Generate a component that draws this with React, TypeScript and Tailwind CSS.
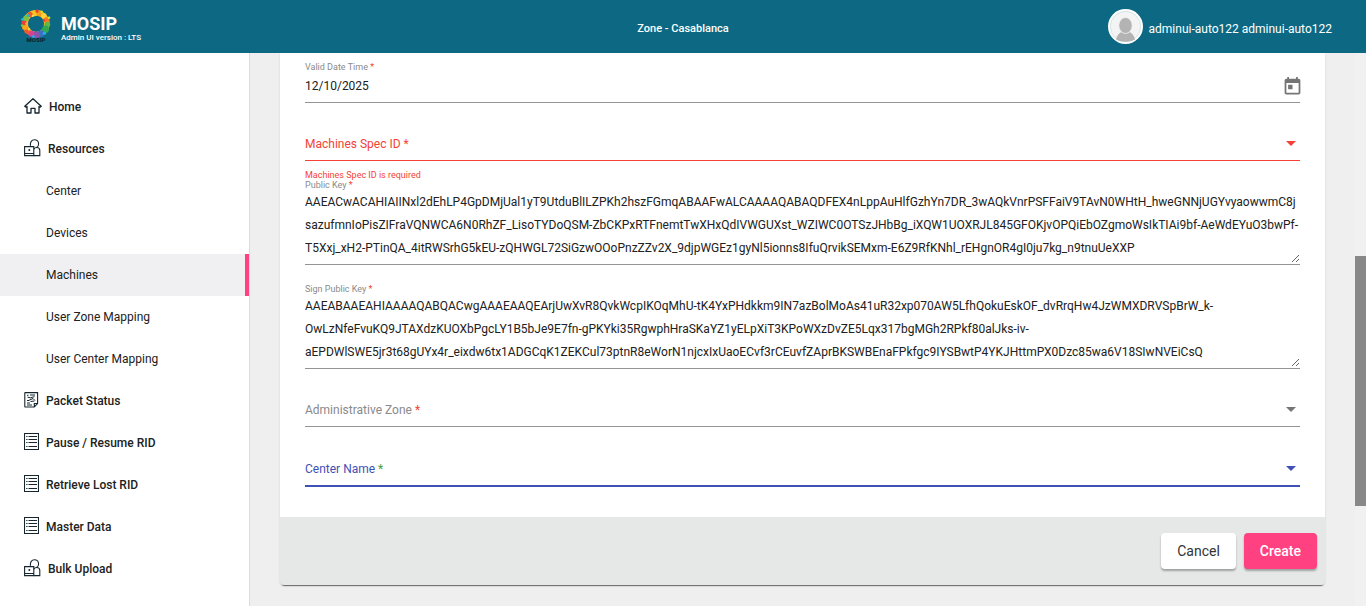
import type { ReactNode } from "react";

const ringDots = [
  { x: 14.5, y: 4.5, r: 3, c: "#f7c51e" },
  { x: 19.5, y: 4.5, r: 2.9, c: "#f39a1f" },
  { x: 10, y: 5.6, r: 2.7, c: "#f0592b" },
  { x: 23.8, y: 6.8, r: 2.7, c: "#fbd334" },
  { x: 26.6, y: 11, r: 2.8, c: "#f47b20" },
  { x: 27.4, y: 15.5, r: 2.8, c: "#5fb946" },
  { x: 25.2, y: 20.3, r: 3.8, c: "#2fa84f" },
  { x: 21, y: 24.6, r: 3.3, c: "#3b6fc4" },
  { x: 16.2, y: 25.8, r: 3.5, c: "#8f52ad" },
  { x: 11.2, y: 24.6, r: 3.1, c: "#d9418f" },
  { x: 7.2, y: 21.8, r: 3, c: "#f0592b" },
  { x: 4.8, y: 18.2, r: 2.7, c: "#f9a61a" },
  { x: 4, y: 13.6, r: 2.6, c: "#ec3d3a" },
  { x: 6, y: 9.2, r: 2.8, c: "#7cc242" },
  { x: 8, y: 6.5, r: 1.6, c: "#27b6c9" },
  { x: 17, y: 2.2, r: 1.6, c: "#ee4036" },
  { x: 13, y: 7, r: 1.3, c: "#ffe45c" },
  { x: 21.6, y: 2.8, r: 1.4, c: "#d9e021" },
  { x: 24, y: 11.4, r: 1.3, c: "#ee4036" },
  { x: 29, y: 8.8, r: 1.3, c: "#d9e021" },
  { x: 6.6, y: 14.6, r: 1.4, c: "#fbb03b" },
  { x: 2.4, y: 10.4, r: 1.3, c: "#27b6c9" },
  { x: 24.4, y: 24.2, r: 1.7, c: "#27a9e1" },
  { x: 13.4, y: 27.4, r: 1.5, c: "#27a9e1" },
  { x: 9, y: 20, r: 1.5, c: "#fbd334" },
  { x: 2, y: 16.4, r: 1.2, c: "#7cc242" },
];

function Logo() {
  return (
    <svg width="32" height="36" viewBox="0 0 32 36" aria-hidden="true">
      <circle cx="16" cy="14.500" r="10.800" fill="none" stroke="#f6b42a" strokeWidth="5.500" />
      {ringDots.map((d, i) => (
        <circle key={i} cx={d.x} cy={d.y} r={d.r} fill={d.c} />
      ))}
      <circle cx="16" cy="14.800" r="7.600" fill="#0d6983" />
      <text x="16" y="33" textAnchor="middle" fontSize="6" fontWeight="900" fill="#0a2733" fontFamily="Roboto, sans-serif">
        MOSIP
      </text>
    </svg>
  );
}

function HomeIcon() {
  return (
    <svg width="18" height="16" viewBox="0 0 18 16" fill="none" stroke="#15262e" strokeWidth="1.3" strokeLinejoin="round" aria-hidden="true">
      <path d="M9 .8 .8 8.2 2 9.2l1-.8V15h4v-4.6h4V15h4V8.400l1 .8 1.200-1z" />
    </svg>
  );
}

function ResourcesIcon() {
  return (
    <svg width="17" height="18" viewBox="0 0 17 18" fill="none" stroke="#15262e" strokeWidth="1.1" aria-hidden="true">
      <path d="M.6 7.600h9.200v9H.6zM.6 14.500h9.200" />
      <path d="M9.800 16.600h6V11.500c0-1.800-1.200-3-3-3-1.400 0-2.400.6-3 1.600" />
      <path d="M6.400 6.900C5.900 3.200 7.800.7 10.400.7s4.200 2 4.200 4.200c0 1.700-.8 3-2 3.700" />
      <circle cx="5.300" cy="11" r="1" fill="#15262e" stroke="none" />
    </svg>
  );
}

function PacketIcon() {
  return (
    <svg width="15" height="16" viewBox="0 0 15 16" fill="none" stroke="#15262e" strokeWidth="1.1" aria-hidden="true">
      <path d="M.8 1.200c0-.4.200-.6.600-.6h12.200v11L10.300 15H1.400c-.4 0-.6-.2-.6-.6zM13.600 11.500h-3.300V15" />
      <path d="M3 3.300h1.500M6 3h5M3.500 5.200l3 .6 4-1.200M4.500 8.500l4.500-2 2 2M3 8.500h2M6.500 9.500l4-.5M3 11h3M3 13h5" strokeWidth="1" />
    </svg>
  );
}

function ListIcon() {
  return (
    <svg width="15" height="17" viewBox="0 0 15 17" fill="none" stroke="#15262e" aria-hidden="true">
      <path d="M.5.5h14v16H.5z" strokeWidth="1.100" />
      <path d="M4.500 3.500H13M4.500 6.500H13M4.500 9.500H13M4.500 13.500H13" />
      <path d="M2.200 3.500h1.300M2.200 6.500h1.300M2.200 9.500h1.300M2.200 13.500h1.300" />
    </svg>
  );
}

function TodayIcon() {
  return (
    <svg width="21" height="21" viewBox="0 0 24 24" fill="#757575" aria-hidden="true">
      <path d="M19 3h-1V1h-2v2H8V1H6v2H5c-1.110 0-1.990.9-1.990 2L3 19c0 1.100.89 2 2 2h14c1.100 0 2-.9 2-2V5c0-1.100-.9-2-2-2zm0 16H5V8h14v11zM7 10h5v5H7z" />
    </svg>
  );
}

function MenuItem({ icon, label }: { icon: ReactNode; label: string }) {
  return (
    <li>
      <a href="#" className="flex h-[42px] items-center gap-[7px] pl-6 font-medium">
        <span className="pb-[3px]">{icon}</span>
        <span>{label}</span>
      </a>
    </li>
  );
}

function SubItem({ label, active = false }: { label: string; active?: boolean }) {
  return (
    <li>
      <a
        href="#"
        aria-current={active ? "page" : undefined}
        className={
          active
            ? "flex h-[42px] items-center border-r-4 border-[#ff4081] bg-[#f0f0f2] pl-[46px]"
            : "flex h-[42px] items-center pl-[46px]"
        }
      >
        {label}
      </a>
    </li>
  );
}

function Star({ className = "text-[#f44336]" }: { className?: string }) {
  return <span className={className}>*</span>;
}

function SelectField({
  id,
  label,
  boxClass,
  labelClass,
  starClass,
}: {
  id: string;
  label: string;
  boxClass: string;
  labelClass: string;
  starClass?: string;
}) {
  return (
    <div className={boxClass}>
      <label htmlFor={id} className={labelClass}>
        {label} <Star className={starClass} />
      </label>
      <select id={id} className="col-start-1 row-start-1 h-[33px] w-full appearance-none bg-transparent outline-none" />
      <svg width="10" height="5" viewBox="0 0 10 5" fill="currentColor" className="pointer-events-none col-start-1 row-start-1 mr-1 justify-self-end" aria-hidden="true">
        <path d="M0 0h10L5 5z" />
      </svg>
    </div>
  );
}

function KeyField({ id, label, value }: { id: string; label: string; value: string }) {
  return (
    <div className="border-b border-[#949494] pb-px">
      <label htmlFor={id} className="block text-[9px] leading-[10px] text-[#8a8a8a]">
        {label} <Star />
      </label>
      <textarea
        id={id}
        defaultValue={value}
        className="mt-px block h-[72px] w-full resize-y overflow-hidden bg-transparent leading-[23px] text-[#212121] outline-none"
      />
    </div>
  );
}

const publicKey =
  "AAEACwACAHIAIINxl2dEhLP4GpDMjUal1yT9UtduBlILZPKh2hszFGmqABAAFwALCAAAAQABAQDFEX4nLppAuHlfGzhYn7DR_3wAQkVnrPSFFaiV9TAvN0WHtH_hweGNNjUGYvyaowwmC8jsazufmnIoPisZIFraVQNWCA6N0RhZF_LisoTYDoQSM-ZbCKPxRTFnemtTwXHxQdIVWGUXst_WZIWC0OTSzJHbBg_iXQW1UOXRJL845GFOKjvOPQiEbOZgmoWsIkTIAi9bf-AeWdEYuO3bwPf-T5Xxj_xH2-PTinQA_4itRWSrhG5kEU-zQHWGL72SiGzwOOoPnzZZv2X_9djpWGEz1gyNl5ionns8IfuQrvikSEMxm-E6Z9RfKNhl_rEHgnOR4gI0ju7kg_n9tnuUeXXP";

const signKey =
  "AAEABAAEAHIAAAAQABQACwgAAAEAAQEArjUwXvR8QvkWcpIKOqMhU-tK4YxPHdkkm9IN7azBolMoAs41uR32xp070AW5LfhQokuEskOF_dvRrqHw4JzWMXDRVSpBrW_k-OwLzNfeFvuKQ9JTAXdzKUOXbPgcLY1B5bJe9E7fn-gPKYki35RgwphHraSKaYZ1yELpXiT3KPoWXzDvZE5Lqx317bgMGh2RPkf80alJks-iv-aEPDWlSWE5jr3t68gUYx4r_eixdw6tx1ADGCqK1ZEKCul73ptnR8eWorN1njcxIxUaoECvf3rCEuvfZAprBKSWBEnaFPkfgc9IYSBwtP4YKJHttmPX0Dzc85wa6V18SIwNVEiCsQ";

export default function App() {
  return (
    <div className="flex h-screen flex-col overflow-hidden bg-[#efefef] font-['Roboto',sans-serif] text-xs text-[#212121]">
      <header className="grid h-[53px] shrink-0 grid-cols-3 items-center bg-[#0d6983] text-white">
        <div className="flex items-center gap-[9px] pl-5">
          <Logo />
          <div className="pt-1">
            <p className="text-lg font-bold leading-[18px]">MOSIP</p>
            <p className="text-[8px] font-medium leading-[9px]">Admin UI version : LTS</p>
          </div>
        </div>
        <p className="pt-[5px] text-center text-[11px] font-medium">Zone - Casablanca</p>
        <div className="flex items-center justify-end gap-[6px] pr-[34px]">
          <svg width="35" height="35" viewBox="0 0 35 35" aria-hidden="true">
            <circle cx="17.500" cy="17.500" r="17.500" fill="#fff" />
            <circle cx="17.500" cy="17.500" r="15.200" fill="#f4f4f4" stroke="#c9d8dd" strokeWidth=".7" />
            <path d="M8 30.500c1-4.500 3.500-7 6-7.600 2 1.600 5 1.600 7 0 2.500.6 5 3.100 6 7.600-5.500 3-13.500 3-19 0z" fill="#b3b3b3" />
            <ellipse cx="17.500" cy="16.500" rx="6.700" ry="8" fill="#b3b3b3" stroke="#f4f4f4" strokeWidth=".8" />
          </svg>
          <span className="pt-1">adminui-auto122 adminui-auto122</span>
        </div>
      </header>

      <div className="flex min-h-0 flex-1">
        <nav className="w-[250px] shrink-0 border-r border-[#dcdcdc] bg-white pt-[33px]">
          <ul>
            <MenuItem icon={<HomeIcon />} label="Home" />
            <MenuItem icon={<ResourcesIcon />} label="Resources" />
            <SubItem label="Center" />
            <SubItem label="Devices" />
            <SubItem label="Machines" active />
            <SubItem label="User Zone Mapping" />
            <SubItem label="User Center Mapping" />
            <MenuItem icon={<PacketIcon />} label="Packet Status" />
            <MenuItem icon={<ListIcon />} label="Pause / Resume RID" />
            <MenuItem icon={<ListIcon />} label="Retrieve Lost RID" />
            <MenuItem icon={<ListIcon />} label="Master Data" />
            <MenuItem icon={<ResourcesIcon />} label="Bulk Upload" />
          </ul>
        </nav>

        <main className="min-w-0 flex-1 px-[30px]">
          <form className="rounded-b bg-[#e5e8e7] shadow-[0_3px_1px_-2px_rgba(0,0,0,0.5),0_1px_2px_0_rgba(0,0,0,0.15)]">
            <div className="bg-white px-[25px] pb-[30px] pt-2">
              <div className="border-b border-[#949494] pb-[3px]">
                <label htmlFor="valid-date" className="block text-[9px] leading-[12px] text-[#8a8a8a]">
                  Valid Date Time <Star />
                </label>
                <div className="flex h-[26px] items-center">
                  <input id="valid-date" defaultValue="12/10/2025" className="min-w-0 flex-1 bg-transparent outline-none" />
                  <button type="button" aria-label="Open calendar" className="-mr-[3px]">
                    <TodayIcon />
                  </button>
                </div>
              </div>

              <SelectField
                id="spec"
                label="Machines Spec ID"
                boxClass="mt-6 grid items-center border-b border-b-[#f44336] text-[#f44336]"
                labelClass="pointer-events-none col-start-1 row-start-1"
              />
              <p className="pt-[9px] text-[9px] leading-[10px] text-[#f44336]">Machines Spec ID is required</p>

              <KeyField id="public-key" label="Public Key" value={publicKey} />
              <div className="mt-[19px]">
                <KeyField id="sign-key" label="Sign Public Key" value={signKey} />
              </div>

              <SelectField
                id="zone"
                label="Administrative Zone"
                boxClass="mt-6 grid items-center border-b border-b-[#949494] text-[#757575]"
                labelClass="pointer-events-none col-start-1 row-start-1 text-[#8a8a8a]"
              />
              <SelectField
                id="center"
                label="Center Name"
                boxClass="mt-[25px] grid items-center border-b-2 border-b-[#3f51b5] text-[#3f51b5]"
                labelClass="pointer-events-none col-start-1 row-start-1"
                starClass="text-[#43a047]"
              />
            </div>
            <div className="flex justify-end gap-2 px-2 py-4 text-sm">
              <button type="button" className="h-9 rounded bg-white px-4 text-[#333333] shadow-[0_2px_2px_rgba(0,0,0,0.3)]">
                Cancel
              </button>
              <button type="submit" className="h-9 rounded bg-[#ff4081] px-4 font-medium text-white shadow-[0_2px_2px_rgba(0,0,0,0.3)]">
                Create
              </button>
            </div>
          </form>
        </main>

        <div className="w-[11px] shrink-0 bg-[#f1f1f1] pt-[203px]" aria-hidden="true">
          <div className="h-[250px] bg-[#888888]" />
        </div>
      </div>
    </div>
  );
}
